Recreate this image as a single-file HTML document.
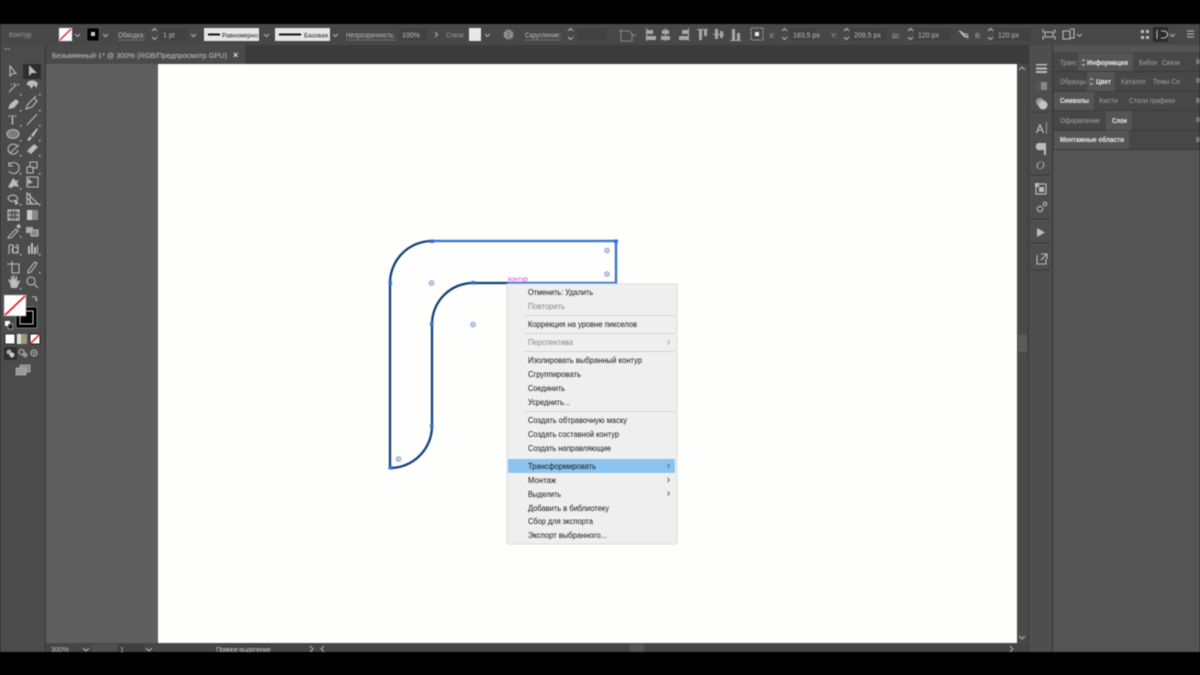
<!DOCTYPE html>
<html lang="ru"><head><meta charset="utf-8"><title>Illustrator</title>
<style>
html,body{margin:0;padding:0;background:#000;width:1200px;height:675px;overflow:hidden}
svg{display:block;filter:blur(.4px)}
text{font-family:"Liberation Sans","DejaVu Sans",sans-serif;font-size:7px;fill:#bdbdbd}
.m text{font-size:8.6px;fill:#111}
.m text.d{fill:#858585}
.b text{font-weight:bold;fill:#f0f0f0}
.p text{fill:#a2a2a2;font-size:7px}
.i{fill:none;stroke:#bcbcbc;stroke-width:1.1}
.f{fill:#bcbcbc;stroke:none}
.c{fill:none;stroke:#b4b4b4;stroke-width:1}
.a{fill:#2f74e0}
.w{fill:none;stroke:#5f86c8;stroke-width:.9}
</style></head><body>
<svg width="1200" height="675" viewBox="0 0 1200 675" xmlns="http://www.w3.org/2000/svg">
<defs>
<pattern id="dg" width="2" height="2" patternUnits="userSpaceOnUse"><rect width="2" height="2" fill="#565656"/><rect width="1" height="1" fill="#686868"/><rect x="1" y="1" width="1" height="1" fill="#686868"/></pattern>
<pattern id="ctl" width="4" height="4" patternUnits="userSpaceOnUse"><rect width="4" height="4" fill="#464646"/><rect width="1" height="1" fill="#505050"/><rect x="2" y="2" width="1" height="1" fill="#505050"/></pattern>
<pattern id="mn" width="2" height="2" patternUnits="userSpaceOnUse"><rect width="2" height="2" fill="#f1f1f1"/><rect width="1" height="1" fill="#e9e9e9"/></pattern>
<pattern id="inp" width="2" height="2" patternUnits="userSpaceOnUse"><rect width="2" height="2" fill="#3f3f3f"/><rect width="1" height="1" fill="#4a4a4a"/></pattern>
</defs>
<rect width="1200" height="675" fill="#000"/>

<!-- control bar -->
<rect x="0" y="24" width="1200" height="21" fill="url(#ctl)"/>
<!-- tab bar -->
<rect x="46" y="45" width="982" height="19" fill="#3b3b3b"/>
<rect x="46" y="45" width="199" height="19" fill="#4a4a4a"/>
<text x="52" y="58" style="font-size:7.4px;fill:#c6c6c6" textLength="175" lengthAdjust="spacingAndGlyphs">Безымянный-1* @ 300% (RGB/Предпросмотр GPU)</text>
<text x="233" y="58" style="font-size:9px;fill:#e0e0e0;font-weight:bold">×</text>
<!-- canvas -->
<rect x="46" y="64" width="112" height="579" fill="url(#dg)"/>
<rect x="158" y="64" width="859" height="579" fill="#fefefd"/>
<!-- scrollbar -->
<rect x="1017" y="64" width="11" height="588" fill="#4a4a4a"/>
<rect x="1018" y="335" width="9" height="17" fill="#5c5c5c"/>
<path class="c" d="M1019 70l3-3 3 3M1019 636l3 3 3-3"/>
<!-- bottom bar -->
<rect x="46" y="643" width="982" height="9" fill="#454545"/>
<rect x="630" y="644" width="14" height="8" fill="#555"/>
<text x="51" y="652" style="font-size:7px">300%</text>
<path class="c" d="M83 648l3 3 3-3M146 648l3 3 3-3M310 646l3 3-3 3M324 646l-3 3 3 3M1010 646l3 3-3 3"/>
<rect x="92" y="644" width="25" height="8" fill="#4f4f4f"/>
<rect x="118" y="644" width="26" height="8" fill="#3e3e3e"/>
<text x="120" y="652">1</text>
<text x="216" y="652" style="font-size:7px" textLength="55">Прямое выделение</text>

<!-- left toolbar -->
<rect x="0" y="45" width="46" height="607" fill="#4b4b4b"/>
<rect x="45" y="45" width="1" height="607" fill="#333"/>
<path d="M5 49h2M8 49h2" stroke="#aaa" stroke-width="1"/>
<rect x="23" y="64" width="18" height="15" fill="#2e2e2e"/>
<path class="i" d="M10 66l0 10 2.500-2.500 3.500 0z"/>
<path class="f" d="M29 65l0 11 3-3 5 0z"/>
<!-- row 2 -->
<path class="i" d="M9 92l7-7M14 83l1 2M17 85l2-1M11 84l1 1"/>
<path class="f" d="M27 83a6 5 0 0 1 11 1l-2 4-2-3-3 4-1-3-3-1z"/>
<!-- row 3 pen -->
<path class="f" d="M8 109l2-5 6-5 3 3-5 6z"/>
<path class="i" d="M26 109l2-5 6-6 3 3-5 6zM34 98l2-2"/>
<!-- T -->
<text x="8.500" y="124" style="font-family:'Liberation Serif',serif;font-size:13px;fill:#cfcfcf">T</text>
<path class="i" d="M27 125l10-11"/>
<!-- ellipse brush -->
<ellipse cx="13" cy="134" rx="6" ry="4.500" fill="#7c7c7c" stroke="#bcbcbc"/>
<path class="f" d="M27 140l3-4 2 2-3 3zM31 135l6-7 1 1-5 8z"/>
<!-- shaper eraser -->
<path class="i" d="M17 146a5 5 0 1 0 1 4M10 153l9-8"/>
<path class="f" d="M27 151l7-7 4 3-7 7z"/>
<!-- rotate scale -->
<path class="i" d="M9 165a5.500 5.500 0 1 1 0 6M9 162v4h4"/>
<path class="i" d="M27 167h6v6h-6zM30 167v-5h7v6h-4"/>
<!-- width warp -->
<path class="f" d="M8 187l3-5 2-4 3 3 3-1-2 3 2 4-5-1-3 2z"/>
<path class="i" d="M27 177h11v10h-11z"/>
<path class="f" d="M28 178l0 7 2-2 3 0z"/>
<!-- shape builder, perspective -->
<path class="i" d="M8 198a5 4 0 0 1 9-1c2 2-1 5-3 4-3 1-5 0-6-3z"/>
<path class="f" d="M15 199l0 6 2-1 2 0z"/>
<path class="i" d="M27 193v11h11zM27 198l6 6M30 193v11"/>
<!-- mesh gradient -->
<rect x="8" y="210" width="11" height="10" fill="#8c8c8c" stroke="#ccc"/>
<path d="M8 213h11M8 217h11M12 210v10M15 210v10" stroke="#333" stroke-width=".7"/>
<rect x="27" y="210" width="11" height="10" fill="#888"/>
<rect x="27" y="210" width="5" height="10" fill="#ccc"/>
<!-- eyedropper blend -->
<path class="i" d="M9 236l7-7 2 2-7 7-3 0z"/>
<path class="f" d="M16 226l3 3 2-3-2-2z"/>
<rect x="26" y="227" width="7" height="6" fill="#aaa"/><rect x="31" y="230" width="7" height="6" fill="#888" stroke="#bbb"/>
<!-- symbol chart -->
<path class="i" d="M9 245h4v8h5v-8h-2M9 245v9"/><circle class="i" cx="15" cy="250" r="3"/>
<path class="f" d="M28 246h2v8h-2zM31 243h2v11h-2zM34 247h2v7h-2zM37 245h1v9h-1z"/>
<!-- artboard slice -->
<path class="i" d="M9 264h10v9h-7v-12M7 264h2"/>
<path class="i" d="M28 273l3-1 5-7 1-2-2-1-2 2-5 7z"/>
<!-- hand zoom -->
<path class="f" d="M10 283l-2-3 1-1 2 2 0-5h1l1 4 0-5h1l1 5 1-4h1l0 6 2-2 1 1-3 7h-6z"/>
<circle class="i" cx="31" cy="281" r="4"/><path class="i" d="M34 284l4 4" stroke-width="1.500"/>
<!-- tiny corner marks -->
<g class="f"><rect x="20" y="94" width="1.500" height="1.500"/><rect x="39" y="94" width="1.500" height="1.500"/><rect x="20" y="110" width="1.500" height="1.500"/><rect x="39" y="110" width="1.500" height="1.500"/><rect x="20" y="125" width="1.500" height="1.500"/><rect x="39" y="125" width="1.500" height="1.500"/><rect x="20" y="140" width="1.500" height="1.500"/><rect x="39" y="140" width="1.500" height="1.500"/><rect x="20" y="155" width="1.500" height="1.500"/><rect x="39" y="155" width="1.500" height="1.500"/><rect x="20" y="173" width="1.500" height="1.500"/><rect x="39" y="173" width="1.500" height="1.500"/><rect x="20" y="188" width="1.500" height="1.500"/><rect x="20" y="204" width="1.500" height="1.500"/><rect x="39" y="204" width="1.500" height="1.500"/><rect x="20" y="236" width="1.500" height="1.500"/><rect x="20" y="254" width="1.500" height="1.500"/><rect x="39" y="254" width="1.500" height="1.500"/><rect x="39" y="272" width="1.500" height="1.500"/><rect x="20" y="288" width="1.500" height="1.500"/></g>
<!-- fill/stroke -->
<rect x="16" y="307" width="21" height="21" fill="#000" stroke="#888" stroke-width=".8"/>
<rect x="20" y="311" width="13" height="13" fill="none" stroke="#ccc" stroke-width="1"/>
<rect x="4" y="295" width="22" height="21" fill="#fff" stroke="#999" stroke-width=".6"/>
<path d="M5 315L25 296" stroke="#e21b24" stroke-width="1.600"/>
<path class="i" d="M32 297h4l1 3M35 299l2 2"/>
<rect x="5" y="321" width="5" height="5" fill="#fff"/><rect x="8" y="324" width="5" height="5" fill="#222" stroke="#ccc" stroke-width=".6"/>
<rect x="5" y="334" width="10" height="10" fill="#fff" stroke="#333"/>
<rect x="17" y="334" width="10" height="10" fill="#9a9a80"/><rect x="17" y="334" width="4" height="10" fill="#e0e0d0"/>
<rect x="30" y="334" width="10" height="10" fill="#fff" stroke="#222"/><path d="M30 344L40 334" stroke="#e21b24" stroke-width="1.500"/>
<rect x="4" y="347" width="13" height="13" fill="#2f2f2f"/>
<circle cx="9" cy="352" r="2.500" fill="#aaa"/><circle cx="12" cy="355" r="2.500" fill="#ccc"/>
<circle class="i" cx="21.500" cy="352" r="2.500"/><circle cx="25" cy="355" r="2.500" fill="#999"/>
<circle class="i" cx="34" cy="353" r="3"/><circle cx="34" cy="353" r="1.200" fill="#999"/>
<rect x="20" y="365" width="10" height="7" fill="#8a8a8a" stroke="#bbb" stroke-width=".7"/>
<rect x="16" y="368" width="10" height="7" fill="#9a9a9a" stroke="#bbb" stroke-width=".7"/>

<!-- control content -->
<text x="9" y="37" style="fill:#a0a0a0">Контур</text>
<rect x="59" y="28" width="13" height="13" fill="#fff" stroke="#aaa" stroke-width=".4"/><path d="M60 40L71 29" stroke="#e21b24" stroke-width="1.300"/>
<path class="c" d="M75 34l2.500 2.500 2.500-2.500M103 34l2.500 2.500 2.500-2.500M191 34l2.500 2.500 2.500-2.500M264 34l2.500 2.500 2.500-2.500M333 34l2.500 2.500 2.500-2.500M485 34l2.500 2.500 2.500-2.500M1077 34l2.500 2.500 2.500-2.500M1170 34l2.500 2.500 2.500-2.500M435 32l2.500 2.500-2.500 2.500"/>
<rect x="87" y="28" width="12" height="13" fill="#000" stroke="#777" stroke-width=".4"/><rect x="91" y="32" width="4" height="4" fill="#ccc"/>
<text x="118" y="37.500" textLength="27" lengthAdjust="spacingAndGlyphs">Обводка:</text>
<path d="M118 40h27M346 40h49M525 40h36" stroke="#999" stroke-width=".6"/>
<path class="c" d="M152 31l2.500-2.500 2.500 2.500M152 37l2.500 2.500 2.500-2.500M568 31l2.500-2.500 2.500 2.500M568 37l2.500 2.500 2.500-2.500M782 31l2.500-2.500 2.500 2.500M782 37l2.500 2.500 2.500-2.500M844 31l2.500-2.500 2.500 2.500M844 37l2.500 2.500 2.500-2.500M908 31l2.500-2.500 2.500 2.500M908 37l2.500 2.500 2.500-2.500M988 31l2.500-2.500 2.500 2.500M988 37l2.500 2.500 2.500-2.500"/>
<rect x="160" y="28" width="28" height="13" fill="url(#inp)"/><text x="163" y="37.500">1 pt</text>
<rect x="204" y="28" width="55" height="13" fill="#e6e6e6"/><rect x="208" y="33.500" width="12" height="2" fill="#111"/>
<text x="222" y="37.500" style="fill:#222;font-size:6.600px" textLength="36" lengthAdjust="spacingAndGlyphs">Равномерно</text>
<rect x="275" y="28" width="55" height="13" fill="#e6e6e6"/><rect x="279" y="33.500" width="22" height="2" fill="#111"/>
<text x="304" y="37.500" style="fill:#222;font-size:6.600px" textLength="24" lengthAdjust="spacingAndGlyphs">Базовая</text>
<text x="346" y="37.500" textLength="49" lengthAdjust="spacingAndGlyphs">Непрозрачность:</text>
<rect x="399" y="28" width="28" height="13" fill="url(#inp)"/><text x="402" y="37.500">100%</text>
<text x="446" y="37.500" textLength="19" lengthAdjust="spacingAndGlyphs" style="fill:#a0a0a0">Стили:</text>
<rect x="469" y="28" width="12" height="13" fill="#e8e8e8"/>
<circle cx="508.500" cy="34.500" r="5" fill="#9a9a9a"/><path d="M503.500 34.500h10M508.500 29.500v10M505 31c2 2 5 2 7 0M505 38c2-2 5-2 7 0" stroke="#555" stroke-width=".6" fill="none"/>
<text x="525" y="37.500" textLength="36" lengthAdjust="spacingAndGlyphs">Скругление:</text>
<rect x="577" y="28" width="30" height="13" fill="url(#inp)"/>
<path d="M621 31h8l3 3v7h-11zM621 29v2M619 31h2" fill="none" stroke="#999" stroke-width=".8"/>
<path d="M632 34l2 2 2-2" fill="none" stroke="#999" stroke-width=".8"/>
<g fill="#a8a8a8"><rect x="646" y="28" width="1" height="13"/><rect x="647" y="30" width="6" height="4"/><rect x="647" y="36" width="9" height="4"/>
<rect x="665" y="28" width="1" height="13"/><rect x="662" y="30" width="7" height="4"/><rect x="661" y="36" width="9" height="4"/>
<rect x="688" y="28" width="1" height="13"/><rect x="682" y="30" width="6" height="4"/><rect x="679" y="36" width="9" height="4"/>
<rect x="697" y="29" width="11" height="1"/><rect x="699" y="30" width="3" height="10"/><rect x="704" y="30" width="3" height="6"/>
<rect x="713" y="34" width="11" height="1"/><rect x="715" y="29" width="3" height="10"/><rect x="720" y="31" width="3" height="7"/>
<rect x="730" y="40" width="11" height="1"/><rect x="732" y="29" width="3" height="11"/><rect x="737" y="33" width="3" height="7"/></g>
<rect x="751" y="28" width="12" height="12" fill="none" stroke="#aaa" stroke-dasharray="2 1"/><rect x="755" y="32" width="4" height="4" fill="#eee"/>
<text x="769" y="38" textLength="6" style="fill:#aaa">Х:</text>
<rect x="790" y="28" width="26" height="13" fill="url(#inp)"/><text x="793" y="37.500">183,5 px</text>
<text x="831" y="38" textLength="6" style="fill:#aaa">Y:</text>
<rect x="851" y="28" width="36" height="13" fill="url(#inp)"/><text x="854" y="37.500">209,5 px</text>
<text x="892" y="38" textLength="9" style="fill:#aaa">Ш:</text>
<rect x="915" y="28" width="36" height="13" fill="url(#inp)"/><text x="918" y="37.500">120 px</text>
<path class="i" d="M960 31l4 3 3 0 1 3-3 0-3-3zM959 31l9 7" stroke-width=".8"/>
<text x="975" y="38" textLength="6" style="fill:#aaa">В:</text>
<rect x="995" y="28" width="36" height="13" fill="url(#inp)"/><text x="998" y="37.500">120 px</text>
<path class="i" d="M1044 30h-1v3M1054 30h1v3M1044 39h-1v-3M1054 39h1v-3M1045 32h8v5h-8z" stroke-width="1"/>
<path class="i" d="M1063 31h7v8h-7zM1070 29h4v9h-4" stroke-width=".9"/>
<g class="f"><rect x="1141" y="30" width="3" height="3"/><rect x="1146" y="30" width="3" height="3"/><rect x="1141" y="36" width="3" height="3"/><rect x="1146" y="36" width="3" height="3"/></g>
<rect x="1153" y="27" width="15" height="15" fill="#2b2b2b"/><path class="i" d="M1157 30v9M1161 31h3a3 3 0 0 1 0 7h-3"/>
<path class="i" d="M1187 31h7M1187 34h7M1187 37h7"/>

<!-- icon strip -->
<rect x="1028" y="45" width="24" height="607" fill="#4e4e4e"/>
<rect x="1028" y="45" width="1" height="607" fill="#383838"/>
<rect x="1052" y="45" width="1" height="607" fill="#353535"/>
<path d="M1030 112h20M1030 175h20M1030 219h20M1030 243h20M1030 270h20" stroke="#3a3a3a" stroke-width="1"/>
<g class="f"><rect x="1036" y="64" width="11" height="1.500"/><rect x="1036" y="67.500" width="11" height="2"/><rect x="1036" y="71" width="11" height="2"/></g>
<rect x="1036" y="82" width="11" height="8" fill="#888"/><rect x="1036" y="82" width="5" height="8" fill="#555"/>
<circle cx="1040" cy="102" r="4" fill="#999"/><circle cx="1043" cy="105" r="4.500" fill="#c4c4c4"/>
<text x="1036" y="133" style="font-size:12px;fill:#ccc">A</text><rect x="1046" y="122" width=".8" height="12" fill="#aaa"/>
<path class="f" d="M1038 143h8v12h-2v-5h-3a3 3 0 0 1-3-7z"/>
<text x="1036" y="169" style="font-size:12px;font-style:italic;fill:#aaa;font-family:'Liberation Serif',serif">O</text>
<rect x="1036" y="184" width="10" height="10" fill="none" stroke="#ccc"/><path class="f" d="M1039 187h5v5h-5zM1035 183h4v4h-4z"/>
<circle class="i" cx="1040" cy="209" r="2.700" stroke-width="1.500"/><circle class="i" cx="1045" cy="204" r="1.800" stroke-width="1.200"/>
<path class="f" d="M1037 228l0 9 8-4.500z"/>
<path class="i" d="M1037 255v9h9v-5M1041 254h6v5M1047 254l-6 6"/>

<!-- right panels -->
<rect x="1053" y="45" width="147" height="607" fill="#545454"/>
<rect x="1053" y="52" width="147" height="97" fill="#474747"/>
<path d="M1053 71.500h147M1053 91h147M1053 110.500h147M1053 130h147M1053 149.500h147" stroke="#3a3a3a"/>
<rect x="1078" y="53" width="55" height="18" fill="#555"/>
<rect x="1087" y="72" width="28" height="19" fill="#555"/>
<rect x="1054" y="92" width="40" height="18" fill="#555"/>
<rect x="1106" y="111" width="26" height="19" fill="#555"/>
<rect x="1054" y="131" width="75" height="18" fill="#555"/>
<g class="p">
<text x="1060" y="65" textLength="17" lengthAdjust="spacingAndGlyphs">Транс</text>
<text x="1139" y="65" textLength="18" lengthAdjust="spacingAndGlyphs">Библи</text>
<text x="1162" y="65" textLength="18" lengthAdjust="spacingAndGlyphs">Связи</text>
<text x="1060" y="84" textLength="26" lengthAdjust="spacingAndGlyphs">Образцы</text>
<text x="1121" y="84" textLength="25" lengthAdjust="spacingAndGlyphs">Каталог</text>
<text x="1153" y="84" textLength="27" lengthAdjust="spacingAndGlyphs">Темы Ce</text>
<text x="1099" y="103" textLength="19" lengthAdjust="spacingAndGlyphs">Кисти</text>
<text x="1129" y="103" textLength="46" lengthAdjust="spacingAndGlyphs">Стили графики</text>
<text x="1060" y="123" textLength="40" lengthAdjust="spacingAndGlyphs">Оформление</text>
</g>
<g class="b">
<text x="1087" y="65" textLength="41" lengthAdjust="spacingAndGlyphs">Информация</text>
<text x="1096" y="84" textLength="15" lengthAdjust="spacingAndGlyphs">Цвет</text>
<text x="1060" y="103" textLength="29" lengthAdjust="spacingAndGlyphs">Символы</text>
<text x="1112" y="123" textLength="15" lengthAdjust="spacingAndGlyphs">Слои</text>
<text x="1060" y="142" textLength="64" lengthAdjust="spacingAndGlyphs">Монтажные области</text>
</g>
<path class="c" d="M1082 61l1.500-1.500 1.500 1.500M1082 64l1.500 1.500 1.500-1.500M1090 80l1.500-1.500 1.500 1.500M1090 83l1.500 1.500 1.500-1.500" stroke-width=".7"/>
<g fill="#777"><rect x="1196" y="59" width="4" height="5"/><rect x="1196" y="78" width="4" height="5"/><rect x="1196" y="98" width="4" height="5"/><rect x="1196" y="117" width="4" height="5"/><rect x="1196" y="137" width="4" height="5"/></g>

<!-- artwork -->
<path d="M390 468V283A42 42 0 0 1 432 241H616V283H473A41 41 0 0 0 432 324V426A42 42 0 0 1 390 468Z" fill="none" stroke="#163f78" stroke-width="2.300"/>
<path d="M432 241H616V283H508" fill="none" stroke="#3f86e6" stroke-width="1.500"/>
<g class="a"><rect x="430" y="239.500" width="4" height="3.500"/><rect x="614" y="239.500" width="4" height="3.500"/><rect x="388.500" y="281" width="3.500" height="4"/><rect x="471" y="281" width="4" height="3.500"/><rect x="430" y="322" width="3.500" height="4"/><rect x="430" y="424" width="3.500" height="4"/><rect x="388.500" y="466" width="4" height="3.500"/></g>
<g class="w"><circle cx="607" cy="250.500" r="2.200"/><circle cx="607" cy="274" r="2.200"/><circle cx="431.500" cy="283" r="2.200"/><circle cx="473" cy="324.500" r="2.200"/><circle cx="398.500" cy="459" r="2.200"/></g>
<g fill="#5f86c8"><circle cx="607" cy="250.500" r=".8"/><circle cx="607" cy="274" r=".8"/><circle cx="431.500" cy="283" r=".8"/><circle cx="473" cy="324.500" r=".8"/><circle cx="398.500" cy="459" r=".8"/></g>

<!-- context menu -->
<rect x="507" y="284" width="170" height="260" fill="url(#mn)" stroke="#dcdcdc" stroke-width="1"/>
<text x="508" y="281" style="font-size:6.500px;fill:#e43ad6" textLength="20" lengthAdjust="spacingAndGlyphs">контур</text>
<rect x="508" y="459" width="167" height="14" fill="#8cc4f0"/>
<path d="M525 315.500h150M525 333.500h150M525 351.500h150M525 411.500h150" stroke="#d6d6d6"/>
<g class="m">
<text x="528" y="295" textLength="65" lengthAdjust="spacingAndGlyphs">Отменить: Удалить</text>
<text class="d" x="528" y="309" textLength="37" lengthAdjust="spacingAndGlyphs">Повторить</text>
<text x="528" y="327" textLength="109" lengthAdjust="spacingAndGlyphs">Коррекция на уровне пикселов</text>
<text class="d" x="528" y="345" textLength="45" lengthAdjust="spacingAndGlyphs">Перспектива</text>
<text x="528" y="363" textLength="114" lengthAdjust="spacingAndGlyphs">Изолировать выбранный контур</text>
<text x="528" y="377" textLength="53" lengthAdjust="spacingAndGlyphs">Сгруппировать</text>
<text x="528" y="391" textLength="37" lengthAdjust="spacingAndGlyphs">Соединить</text>
<text x="528" y="405" textLength="42" lengthAdjust="spacingAndGlyphs">Усреднить...</text>
<text x="528" y="423" textLength="99" lengthAdjust="spacingAndGlyphs">Создать обтравочную маску</text>
<text x="528" y="437" textLength="91" lengthAdjust="spacingAndGlyphs">Создать составной контур</text>
<text x="528" y="451" textLength="83" lengthAdjust="spacingAndGlyphs">Создать направляющие</text>
<text x="528" y="469" textLength="68" lengthAdjust="spacingAndGlyphs">Трансформировать</text>
<text x="528" y="483" textLength="28" lengthAdjust="spacingAndGlyphs">Монтаж</text>
<text x="528" y="497" textLength="33" lengthAdjust="spacingAndGlyphs">Выделить</text>
<text x="528" y="511" textLength="81" lengthAdjust="spacingAndGlyphs">Добавить в библиотеку</text>
<text x="528" y="524" textLength="65" lengthAdjust="spacingAndGlyphs">Сбор для экспорта</text>
<text x="528" y="538" textLength="79" lengthAdjust="spacingAndGlyphs">Экспорт выбранного...</text>
</g>
<path d="M667.500 340.500l2 2-2 2" fill="none" stroke="#aaa" stroke-width=".9"/>
<path d="M667.500 464l2 2-2 2M667.500 478l2 2-2 2M667.500 491.500l2 2-2 2" fill="none" stroke="#666" stroke-width=".9"/>
<!-- bottom cover -->
<rect x="0" y="652" width="1200" height="23" fill="#000"/>
</svg>
</body></html>
